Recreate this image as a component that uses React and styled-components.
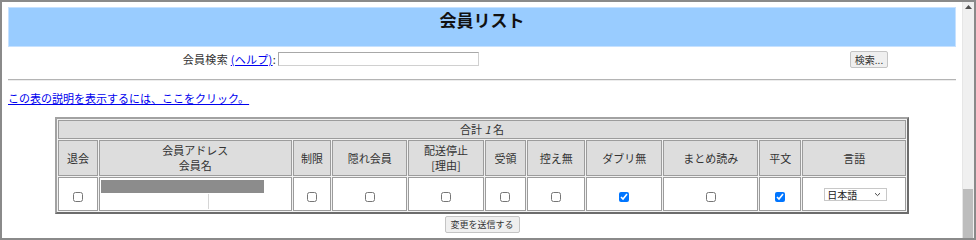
import React from "react"
import styled, { createGlobalStyle } from "styled-components"

const GlobalStyle = createGlobalStyle`
  html, body {
    margin: 0;
    padding: 0;
    background: #fff;
    overflow: hidden;
  }
  body {
    font-family: "Noto Sans CJK JP", "Noto Sans", sans-serif;
  }
`

const Frame = styled.div`
  display: flex;
  width: 976px;
  height: 240px;
  box-sizing: border-box;
  border: 2px solid #8a8a8a;
  overflow: hidden;
`

const Page = styled.div`
  flex: 1;
  min-width: 0;
  padding: 5px 6px 0;
  background: #fff;
  color: #333;
  font-size: 11px;
`

const Scrollbar = styled.div`
  display: flex;
  flex-direction: column;
  width: 11px;
  background: #f0f0f0;
  border-left: 1px solid #e6e6e6;
`

const ScrollArrow = styled.div`
  display: flex;
  justify-content: center;
  padding-top: 3px;
  height: 12px;
`

const ScrollTrack = styled.div`
  flex: 1;
  display: flex;
  flex-direction: column;
  justify-content: flex-end;
`

const ScrollThumb = styled.div`
  height: 49px;
  margin-right: 1px;
  background: #bdbdbd;
`

const TitleBar = styled.div`
  height: 40px;
  box-sizing: border-box;
  padding-top: 2px;
  background: #99ccff;
  border: 1px solid #c6e1ff;
  text-align: center;
`

const Title = styled.h1`
  margin: 0;
  font-size: 17px;
  line-height: 20px;
  font-weight: 700;
  color: #111;
`

const SearchRow = styled.div`
  display: grid;
  grid-template-columns: 270px 201px 1fr;
  align-items: center;
  height: 20px;
  margin-top: 2px;
`

const SearchLabel = styled.div`
  justify-self: end;
  padding-right: 2px;
  line-height: 14px;
  letter-spacing: 0.3px;
`

const Link = styled.a`
  color: #0000ee;
  text-decoration: underline;
`

const SearchInput = styled.div`
  height: 14px;
  box-sizing: border-box;
  border: 1px solid #a8a8a8;
  border-bottom-color: #d0d0d0;
  border-right-color: #d0d0d0;
  background: #fff;
`

const ButtonCell = styled.div`
  display: flex;
  justify-content: flex-end;
  padding-right: 68px;
`

const Button = styled.button`
  font-family: inherit;
  font-size: ${({ small }) => (small ? "9px" : "10px")};
  color: #333;
  height: 17px;
  width: ${({ width }) => width}px;
  padding: 0;
  line-height: 15px;
  background: #efefef;
  border: 1px solid #c4c4c4;
  border-radius: 2px;
`

const Rule = styled.hr`
  margin: 10px 0 0;
  border: 0;
  border-top: 1px solid #b4b4b4;
  border-bottom: 1px solid #ececec;
`

const HelpLine = styled.div`
  margin-top: 10px;
  line-height: 14px;
`

const MemberTable = styled.table`
  margin: 12px auto 0;
  width: 854px;
  table-layout: fixed;
  border-collapse: separate;
  border-spacing: 1px;
  border: 2px solid;
  border-color: #a2a2a2 #6c6c6c #6c6c6c #a2a2a2;
  background: #f2f2f2;
`

const HeadCell = styled.td`
  background: #dddddd;
  border: 1px solid #9c9c9c;
  text-align: center;
  padding: 0;
  height: ${({ h }) => h}px;
  line-height: 15px;
  color: #333;
`

const DataCell = styled.td`
  background: #fff;
  border: 1px solid #9c9c9c;
  text-align: center;
  padding: 0;
  height: 31px;
`

const Total = styled.span`
  font-style: italic;
`

const Check = styled.input.attrs({ type: "checkbox", readOnly: true })`
  width: 10px;
  height: 10px;
  margin: 1px 0 0;
  accent-color: #0075ff;
  vertical-align: middle;
`

const AddressCell = styled(DataCell)`
  text-align: left;
  padding: 0 0 1px 1px;
  vertical-align: top;
`

const Redacted = styled.div`
  width: ${({ w }) => w}px;
  height: ${({ h }) => h}px;
  background: ${({ dark }) => (dark ? "#8c8c8c" : "#fff")};
  border-right: ${({ dark }) => (dark ? "none" : "1px solid #d6d6d6")};
  margin-top: ${({ dark }) => (dark ? "2px" : "1px")};
`

const Select = styled.div`
  display: inline-flex;
  align-items: center;
  justify-content: space-between;
  width: 63px;
  height: 13px;
  box-sizing: border-box;
  padding: 0 5px 0 2px;
  margin: 1px 0 0 3px;
  border: 1px solid #c8c8c8;
  font-size: 10px;
  line-height: 11px;
  color: #222;
  text-align: left;
`

const Footer = styled.div`
  display: flex;
  justify-content: center;
  margin-top: 2px;
`

const columns = [41, 190, 40, 75, 76, 42, 59, 76, 95, 43, 103]

const heads = [
  ["退会"],
  ["会員アドレス", "会員名"],
  ["制限"],
  ["隠れ会員"],
  ["配送停止", "[理由]"],
  ["受領"],
  ["控え無"],
  ["ダブリ無"],
  ["まとめ読み"],
  ["平文"],
  ["言語"],
]

const Chevron = () => (
  <svg width="7" height="5" viewBox="0 0 7 5">
    <path d="M1 1.2 L3.5 3.6 L6 1.2" fill="none" stroke="#444" strokeWidth="1" />
  </svg>
)

const UpArrow = () => (
  <svg width="7" height="4" viewBox="0 0 7 4">
    <path d="M0 4 L3.5 0 L7 4 Z" fill="#505050" />
  </svg>
)

const App = () => {
  return (
    <Frame>
      <GlobalStyle />
      <Page>
        <TitleBar>
          <Title>会員リスト</Title>
        </TitleBar>

        <SearchRow>
          <SearchLabel>
            会員検索 <Link href="#">(ヘルプ)</Link>:
          </SearchLabel>
          <SearchInput />
          <ButtonCell>
            <Button width={38}>検索...</Button>
          </ButtonCell>
        </SearchRow>

        <Rule />

        <HelpLine>
          <Link href="#">この表の説明を表示するには、ここをクリック。</Link>
        </HelpLine>

        <MemberTable>
          <colgroup>
            {columns.map((w, i) => (
              <col key={i} style={{ width: w - 2 }} />
            ))}
          </colgroup>
          <tbody>
            <tr>
              <HeadCell colSpan={11} h={17}>
                合計 <Total>1</Total> 名
              </HeadCell>
            </tr>
            <tr>
              {heads.map((lines, i) => (
                <HeadCell key={i} h={34}>
                  {lines.map((l, j) => (
                    <div key={j}>{l}</div>
                  ))}
                </HeadCell>
              ))}
            </tr>
            <tr>
              <DataCell><Check /></DataCell>
              <AddressCell>
                <Redacted dark w={163} h={13} />
                <Redacted w={107} h={15} />
              </AddressCell>
              <DataCell><Check /></DataCell>
              <DataCell><Check /></DataCell>
              <DataCell><Check /></DataCell>
              <DataCell><Check /></DataCell>
              <DataCell><Check /></DataCell>
              <DataCell><Check defaultChecked /></DataCell>
              <DataCell><Check /></DataCell>
              <DataCell><Check defaultChecked /></DataCell>
              <DataCell>
                <Select>
                  <span>日本語</span>
                  <Chevron />
                </Select>
              </DataCell>
            </tr>
          </tbody>
        </MemberTable>

        <Footer>
          <Button small width={75}>変更を送信する</Button>
        </Footer>
      </Page>
      <Scrollbar>
        <ScrollArrow>
          <UpArrow />
        </ScrollArrow>
        <ScrollTrack>
          <ScrollThumb />
        </ScrollTrack>
      </Scrollbar>
    </Frame>
  )
}

export default App
